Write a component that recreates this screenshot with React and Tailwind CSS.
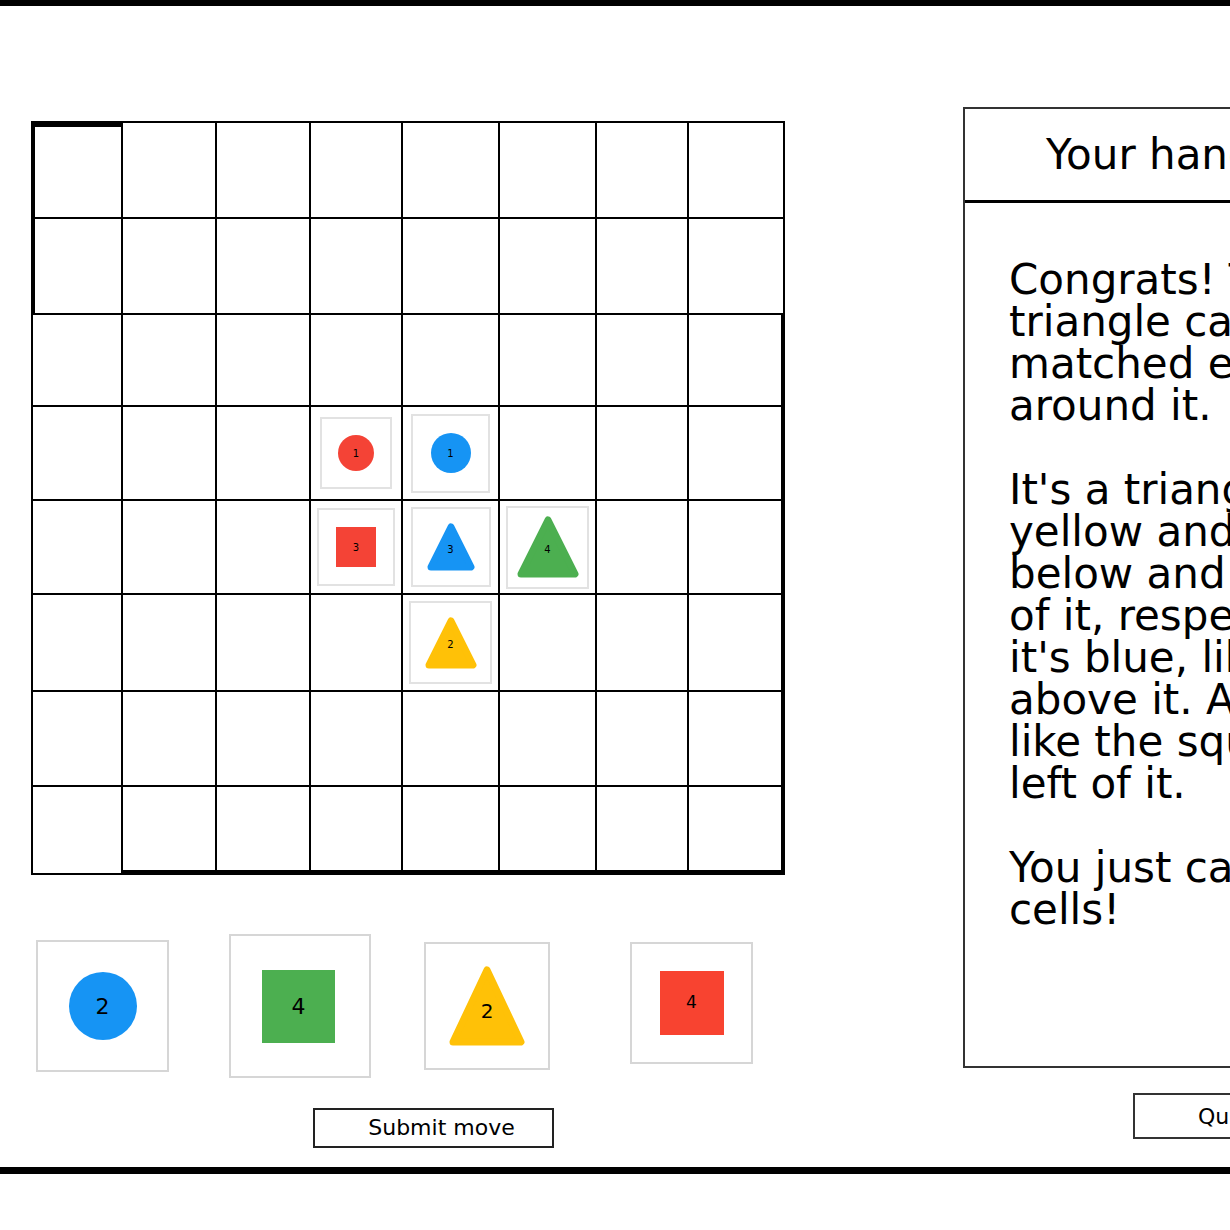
import React from "react";

const RED = "#f44336";
const BLUE = "#1694f4";
const GREEN = "#4caf50";
const YELLOW = "#ffc107";

const Triangle = ({ color, w, h, label, textClass }) => (
    <div className="relative flex items-center justify-center" style={{ width: w, height: h }}>
        <svg width={w} height={h} viewBox={`0 0 ${w} ${h}`} className="absolute inset-0">
            <polygon
                points={`${w / 2},4 ${w - 4},${h - 4} 4,${h - 4}`}
                fill={color}
                stroke={color}
                strokeWidth="7"
                strokeLinejoin="round"
            />
        </svg>
        <span className={`relative text-black ${textClass}`}>{label}</span>
    </div>
);

// pieces already on the board, keyed by "row-col"
const boardTiles = {
    "3-3": { shape: "circle", color: RED, n: 1, size: 72, d: 36 },
    "3-4": { shape: "circle", color: BLUE, n: 1, size: 79, d: 40 },
    "4-3": { shape: "square", color: RED, n: 3, size: 78, d: 40 },
    "4-4": { shape: "triangle", color: BLUE, n: 3, size: 80, d: 48 },
    "4-5": { shape: "triangle", color: GREEN, n: 4, size: 83, d: 62 },
    "5-4": { shape: "triangle", color: YELLOW, n: 2, size: 83, d: 52 },
};

const BoardTile = ({ t }) => (
    <div
        className="flex items-center justify-center border-2 border-[#e2e2e2] bg-white"
        style={{ width: t.size, height: t.size }}
    >
        {t.shape === "circle" && (
            <div className="rounded-full flex items-center justify-center text-[10px]" style={{ width: t.d, height: t.d, background: t.color }}>
                {t.n}
            </div>
        )}
        {t.shape === "square" && (
            <div className="flex items-center justify-center text-[10px]" style={{ width: t.d, height: t.d, background: t.color }}>
                {t.n}
            </div>
        )}
        {t.shape === "triangle" && <Triangle color={t.color} w={t.d} h={t.d} label={t.n} textClass="text-[10px] mt-[4px]" />}
    </div>
);

const cellClass = (r, c) => {
    let cls = "flex items-center justify-center border-black border-r-2 border-b-2";
    if (c === 0 && r < 2) cls += " border-l-2";
    if (r === 0 && c === 0) cls += " border-t-[4px]";
    if (c === 7 && r >= 2) cls += " border-r-4";
    if (r === 7 && c >= 1) cls += " border-b-[5px]";
    return cls;
};

const Board = () => {
    const cells = [];
    for (let r = 0; r < 8; r++) {
        for (let c = 0; c < 8; c++) {
            const t = boardTiles[`${r}-${c}`];
            cells.push(
                <div key={`${r}-${c}`} className={cellClass(r, c)}>
                    {t && <BoardTile t={t} />}
                </div>
            );
        }
    }
    return (
        <div className="grid grid-cols-[90px_94px_94px_92px_97px_97px_92px_96px] grid-rows-[96px_96px_92px_94px_94px_97px_95px_88px] w-[754px] border-l-2 border-t-2 border-black">
            {cells}
        </div>
    );
};

const HandCard = ({ className, children }) => (
    <div className={`flex items-center justify-center border-2 border-[#d6d6d6] bg-white ${className}`}>
        {children}
    </div>
);

export default function App() {
    return (
        <div className="w-[1230px] h-[1230px] overflow-hidden bg-white text-black font-['DejaVu_Sans',sans-serif]">
            <div className="h-[6px] bg-black" />

            <div className="flex h-[1161px]">
                {/* Left: board, hand and submit */}
                <div className="w-[930px] shrink-0 flex flex-col pl-[31px] pt-[115px]">
                    <Board />

                    <div className="flex items-center h-[144px] mt-[59px]">
                        <HandCard className="w-[133px] h-[132px] ml-[5px]">
                            <div className="w-[68px] h-[68px] rounded-full bg-[#1694f4] flex items-center justify-center text-[22px]">2</div>
                        </HandCard>
                        <HandCard className="w-[142px] h-[144px] ml-[60px]">
                            <div className="w-[73px] h-[73px] bg-[#4caf50] flex items-center justify-center text-[22px] ml-[-3px]">4</div>
                        </HandCard>
                        <HandCard className="w-[126px] h-[128px] ml-[53px]">
                            <Triangle color={YELLOW} w={76} h={80} label={2} textClass="text-[20px] mt-[10px]" />
                        </HandCard>
                        <HandCard className="w-[123px] h-[122px] ml-[80px] mb-[6px]">
                            <div className="w-[64px] h-[64px] bg-[#f84330] flex items-center justify-center text-[17px]">4</div>
                        </HandCard>
                    </div>

                    <button className="mt-[30px] ml-[282px] w-[241px] h-[40px] border-2 border-[#222] pl-[16px] text-[22px] leading-none flex items-center justify-center">
                        Submit move
                    </button>
                </div>

                {/* Right: hand panel */}
                <div className="shrink-0 ml-[33px] pt-[101px] flex flex-col">
                    <div className="w-[430px] h-[961px] border-2 border-[#333] flex flex-col">
                        <div className="h-[94px] border-b-[3px] border-black flex items-center pl-[81px] text-[42px] whitespace-nowrap">
                            Your hand
                        </div>
                        <div className="pl-[44px] pt-[56px] text-[42px] leading-[42px] whitespace-nowrap">
                            <p>Congrats! The</p>
                            <p>triangle card you</p>
                            <p>matched everything</p>
                            <p>around it.</p>
                            <p className="h-[42px]" />
                            <p>It's a triangle, like the</p>
                            <p>yellow and green cards</p>
                            <p>below and to the right</p>
                            <p>of it, respectively. And</p>
                            <p>it's blue, like the circle</p>
                            <p>above it. And it's a 3,</p>
                            <p>like the square to the</p>
                            <p>left of it.</p>
                            <p className="h-[42px]" />
                            <p>You just captured 4</p>
                            <p>cells!</p>
                        </div>
                    </div>
                    <button className="mt-[25px] ml-[170px] w-[240px] h-[46px] border-2 border-[#333] pl-[63px] text-[22px] text-left whitespace-nowrap">
                        Quit game
                    </button>
                </div>
            </div>

            <div className="h-[7px] bg-black" />
        </div>
    );
}
